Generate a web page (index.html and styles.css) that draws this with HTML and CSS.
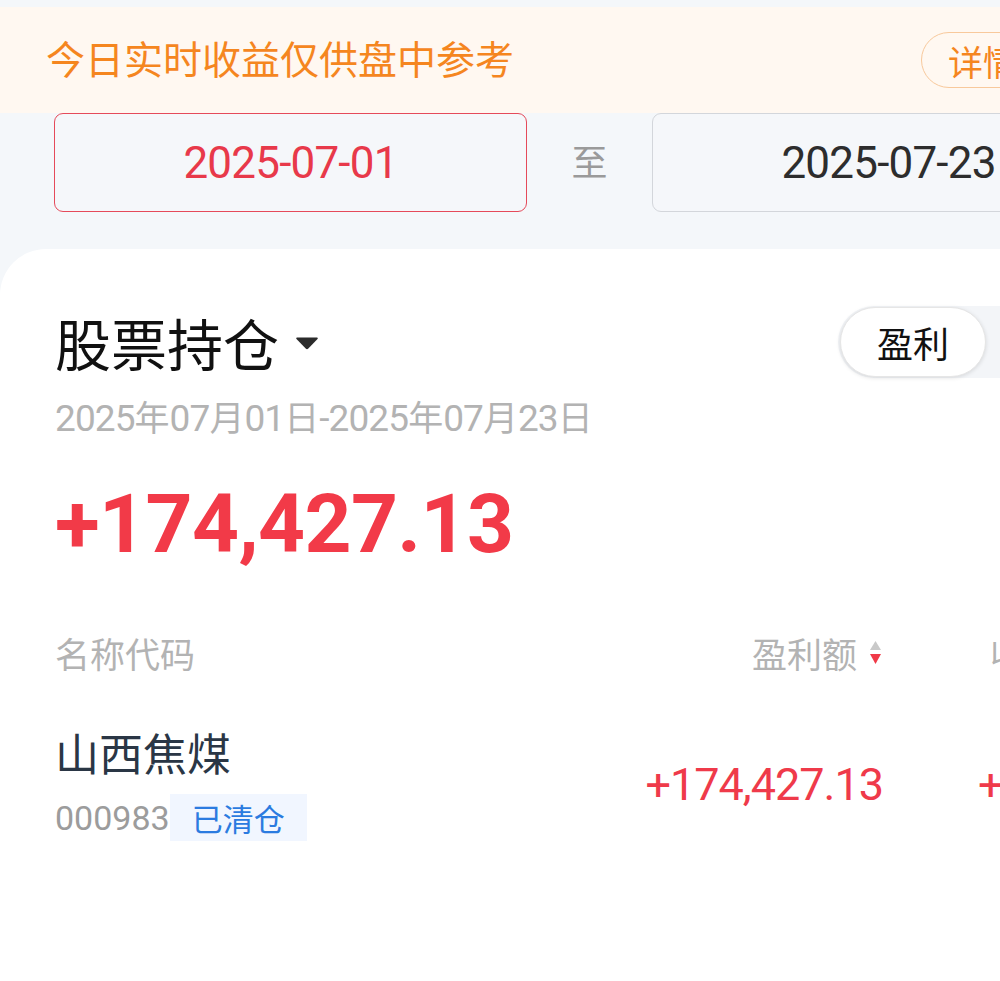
FILE: index.html
```html
<!DOCTYPE html>
<html lang="zh-CN">
<head>
<meta charset="utf-8">
<title>股票持仓</title>
<link rel="stylesheet" href="styles.css">
</head>
<body>
<div class="page">
  <div class="notice">
    <span class="notice-text">今日实时收益仅供盘中参考</span>
    <span class="notice-btn">详情</span>
  </div>
  <div class="dates">
    <div class="date-box active"><span class="num">2025-07-01</span></div>
    <span class="to">至</span>
    <div class="date-box"><span class="num">2025-07-23</span></div>
  </div>
  <div class="card">
    <div class="title-row">
      <div class="title">股票持仓
        <svg class="caret" width="24" height="14" viewBox="0 0 24 14"><path d="M2 1.5 H22 Q23.5 1.5 22.5 3 L13.3 12.5 Q12 13.8 10.7 12.5 L1.5 3 Q0.5 1.5 2 1.5Z" fill="#2b2b2b"/></svg>
      </div>
      <div class="seg">
        <span class="seg-item on">盈利</span>
        <span class="seg-item">亏损</span>
      </div>
    </div>
    <div class="range"><span class="num">2025</span>年<span class="num">07</span>月<span class="num">01</span>日<span class="num">-2025</span>年<span class="num">07</span>月<span class="num">23</span>日</div>
    <div class="total num">+174,427.13</div>
    <div class="table">
      <div class="th">名称代码</div>
      <div class="th right">盈利额
        <svg class="sort" width="15" height="30" viewBox="0 0 15 30"><path d="M7.5 3 L13 12 H2Z" fill="#c9c9c9"/><path d="M2 16 H13 L7.5 26Z" fill="#f03a48"/></svg>
      </div>
      <div class="th third">收益率</div>

      <div class="td name-cell">
        <div class="stock-name">山西焦煤</div>
        <div class="code-line"><span class="code num">000983</span><span class="tag">已清仓</span></div>
      </div>
      <div class="td right value num">+174,427.13</div>
      <div class="td third value num">+12.35%</div>
    </div>
  </div>
</div>
</body>
</html>
```
FILE: styles.css
```css
html, body {
  margin: 0;
  padding: 0;
  background: #f4f7fa;
  overflow: hidden;
  width: 1000px;
  height: 981px;
}
body {
  font-family: "Noto Sans CJK SC", "Noto Sans", sans-serif;
}
.page {
  width: 1200px;
  padding-top: 7px;
}
.num {
  font-family: Roboto, "Noto Sans CJK SC", sans-serif;
}
.notice {
  height: 106px;
  background: #fff8f1;
  display: flex;
  align-items: center;
  padding-left: 46px;
  padding-bottom: 5px;
  box-sizing: border-box;
}
.notice-text {
  color: #f5861f;
  font-size: 39px;
  line-height: 1;
}
.notice-btn {
  margin-left: 407px;
  height: 56px;
  margin-top: 5px;
  box-sizing: border-box;
  border: 1.5px solid #f8c99c;
  border-radius: 28px;
  padding: 0 26px;
  color: #f5861f;
  font-size: 35px;
  display: flex;
  align-items: center;
}
.dates {
  display: flex;
  align-items: center;
  padding-left: 54px;
  height: 99px;
}
.date-box {
  width: 473px;
  height: 99px;
  box-sizing: border-box;
  border: 1.5px solid #d3d6db;
  border-radius: 9px;
  background: #f5f7fa;
  display: flex;
  align-items: center;
  justify-content: center;
  color: #2d2d2d;
  font-size: 44px;
  letter-spacing: -0.8px;
}
.date-box.active {
  border-color: #e54a5a;
  color: #e8394a;
}
.to {
  width: 125px;
  text-align: center;
  color: #9a9a9a;
  font-size: 36px;
  margin-top: -6px;
}
.card {
  margin-top: 37px;
  background: #fff;
  border-top-left-radius: 46px;
  padding: 58px 0 200px 55px;
}
.title-row {
  display: flex;
  align-items: center;
  justify-content: space-between;
  height: 70px;
}
.title {
  font-size: 56px;
  line-height: 1;
  color: #111;
  display: flex;
  align-items: center;
}
.caret {
  margin-left: 16px;
  margin-top: 2px;
}
.seg {
  display: flex;
  align-items: center;
  height: 72px;
  background: #f3f5f8;
  border-radius: 36px;
  padding: 0 2px;
  margin-right: 12px;
  width: 350px;
  box-sizing: border-box;
}
.seg-item {
  height: 70px;
  width: 146px;
  display: flex;
  align-items: center;
  justify-content: center;
  border-radius: 35px;
  font-size: 36px;
  color: #666;
}
.seg-item.on {
  background: #fff;
  color: #111;
  box-shadow: 0 1px 4px rgba(0,0,0,0.12);
  border: 1px solid #e6e6e6;
  box-sizing: border-box;
}
.range {
  margin-top: 17px;
  color: #b3b3b3;
  font-size: 35px;
  line-height: 44px;
}
.range .num {
  font-size: 37px;
  letter-spacing: -0.9px;
}
.total {
  margin-top: 33px;
  color: #f23a48;
  font-weight: bold;
  font-size: 82px;
  line-height: 100px;
  letter-spacing: -0.6px;
}
.table {
  margin-top: 59px;
  display: grid;
  grid-template-columns: 400px 333px 220px;
  column-gap: 95px;
  row-gap: 54px;
}
.th {
  color: #b3b3b3;
  font-size: 35px;
  line-height: 40px;
  display: flex;
  align-items: center;
}
.th.right {
  justify-content: flex-end;
}
.th.third {
  padding-left: 12px;
}
.sort {
  margin-left: 11px;
}
.stock-name {
  color: #2a3645;
  font-size: 44px;
  line-height: 50px;
}
.code-line {
  margin-top: 17px;
  display: flex;
  align-items: center;
}
.code {
  color: #9c9c9c;
  font-size: 34px;
}
.tag {
  background: #f1f6ff;
  color: #2b7be0;
  font-size: 31px;
  height: 47px;
  padding: 0 22px;
  display: flex;
  align-items: center;
}
.value {
  color: #ef3a4a;
  font-size: 45px;
  letter-spacing: -1px;
  align-self: center;
}
.td.right {
  text-align: right;
}
```
